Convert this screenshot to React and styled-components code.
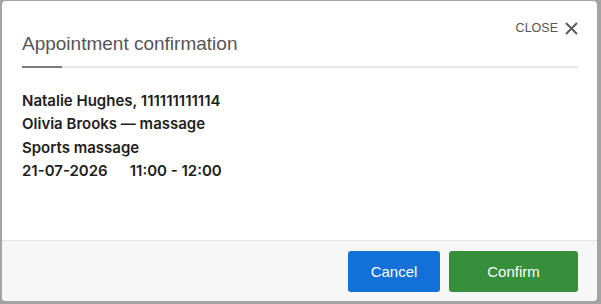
import React from "react";
import styled, { createGlobalStyle } from "styled-components";

const Global = createGlobalStyle`
  html, body { margin: 0; padding: 0; }
  body { background: #a3a3a3; width: 601px; height: 304px; overflow: hidden; }
  #root { height: 304px; }
`;

const Backdrop = styled.div`
  height: 304px;
  box-sizing: border-box;
  padding: 1px 4px 3px 2px;
  display: flex;
`;

const Modal = styled.div`
  flex: 1;
  background: #fff;
  border-radius: 4px;
  display: flex;
  flex-direction: column;
  overflow: hidden;
`;

const Header = styled.div`
  position: relative;
  padding: 32px 19px 0 20px;
`;

const Title = styled.h2`
  margin: 0;
  font-family: "Liberation Sans", Arial, sans-serif;
  font-weight: 400;
  font-size: 19px;
  line-height: 22px;
  color: #555;
  padding-bottom: 11px;
`;

const Divider = styled.div`
  height: 2px;
  background: #e6e6e6;
  position: relative;
  &::before {
    content: "";
    position: absolute;
    left: 0;
    top: 0;
    width: 40px;
    height: 2px;
    background: #7a7a7a;
  }
`;

const CloseButton = styled.button`
  position: absolute;
  top: 20px;
  right: 19px;
  display: flex;
  align-items: center;
  gap: 7px;
  border: 0;
  background: none;
  padding: 0;
  cursor: pointer;
  font-family: "Liberation Sans", Arial, sans-serif;
  font-size: 12.5px;
  color: #555;
`;

const Body = styled.div`
  flex: 1;
  padding: 21px 20px 0 20px;
  font-family: Inter, "Noto Sans", sans-serif;
  font-weight: 600;
  font-size: 15px;
  line-height: 23.3px;
  color: #1e1e1e;
`;

const Line = styled.div``;

const Time = styled.span`
  margin-left: 22px;
`;

const Footer = styled.div`
  height: 61px;
  box-sizing: border-box;
  border-top: 1px solid #e4e4e4;
  background: #f7f7f7;
  display: flex;
  justify-content: flex-end;
  align-items: flex-start;
  gap: 9px;
  padding: 10px 19px 0 0;
`;

const Button = styled.button`
  height: 41px;
  width: ${(p) => p.$w}px;
  border: 0;
  border-radius: 3px;
  background: ${(p) => p.$bg};
  color: #fff;
  font-family: "Liberation Sans", Arial, sans-serif;
  font-size: 15px;
  cursor: pointer;
`;

export default function App() {
  return (
    <>
      <Global />
      <Backdrop>
        <Modal>
          <Header>
            <Title>Appointment confirmation</Title>
            <Divider />
            <CloseButton>
              CLOSE
              <svg width="13" height="13" viewBox="0 0 13 13">
                <path d="M1 1L12 12M12 1L1 12" stroke="#555" strokeWidth="1.8" />
              </svg>
            </CloseButton>
          </Header>
          <Body>
            <Line>Natalie Hughes, 111111111114</Line>
            <Line>Olivia Brooks — massage</Line>
            <Line>Sports massage</Line>
            <Line>
              21-07-2026<Time>11:00 - 12:00</Time>
            </Line>
          </Body>
          <Footer>
            <Button $w={92} $bg="#1271d6">Cancel</Button>
            <Button $w={129} $bg="#368f3b">Confirm</Button>
          </Footer>
        </Modal>
      </Backdrop>
    </>
  );
}
